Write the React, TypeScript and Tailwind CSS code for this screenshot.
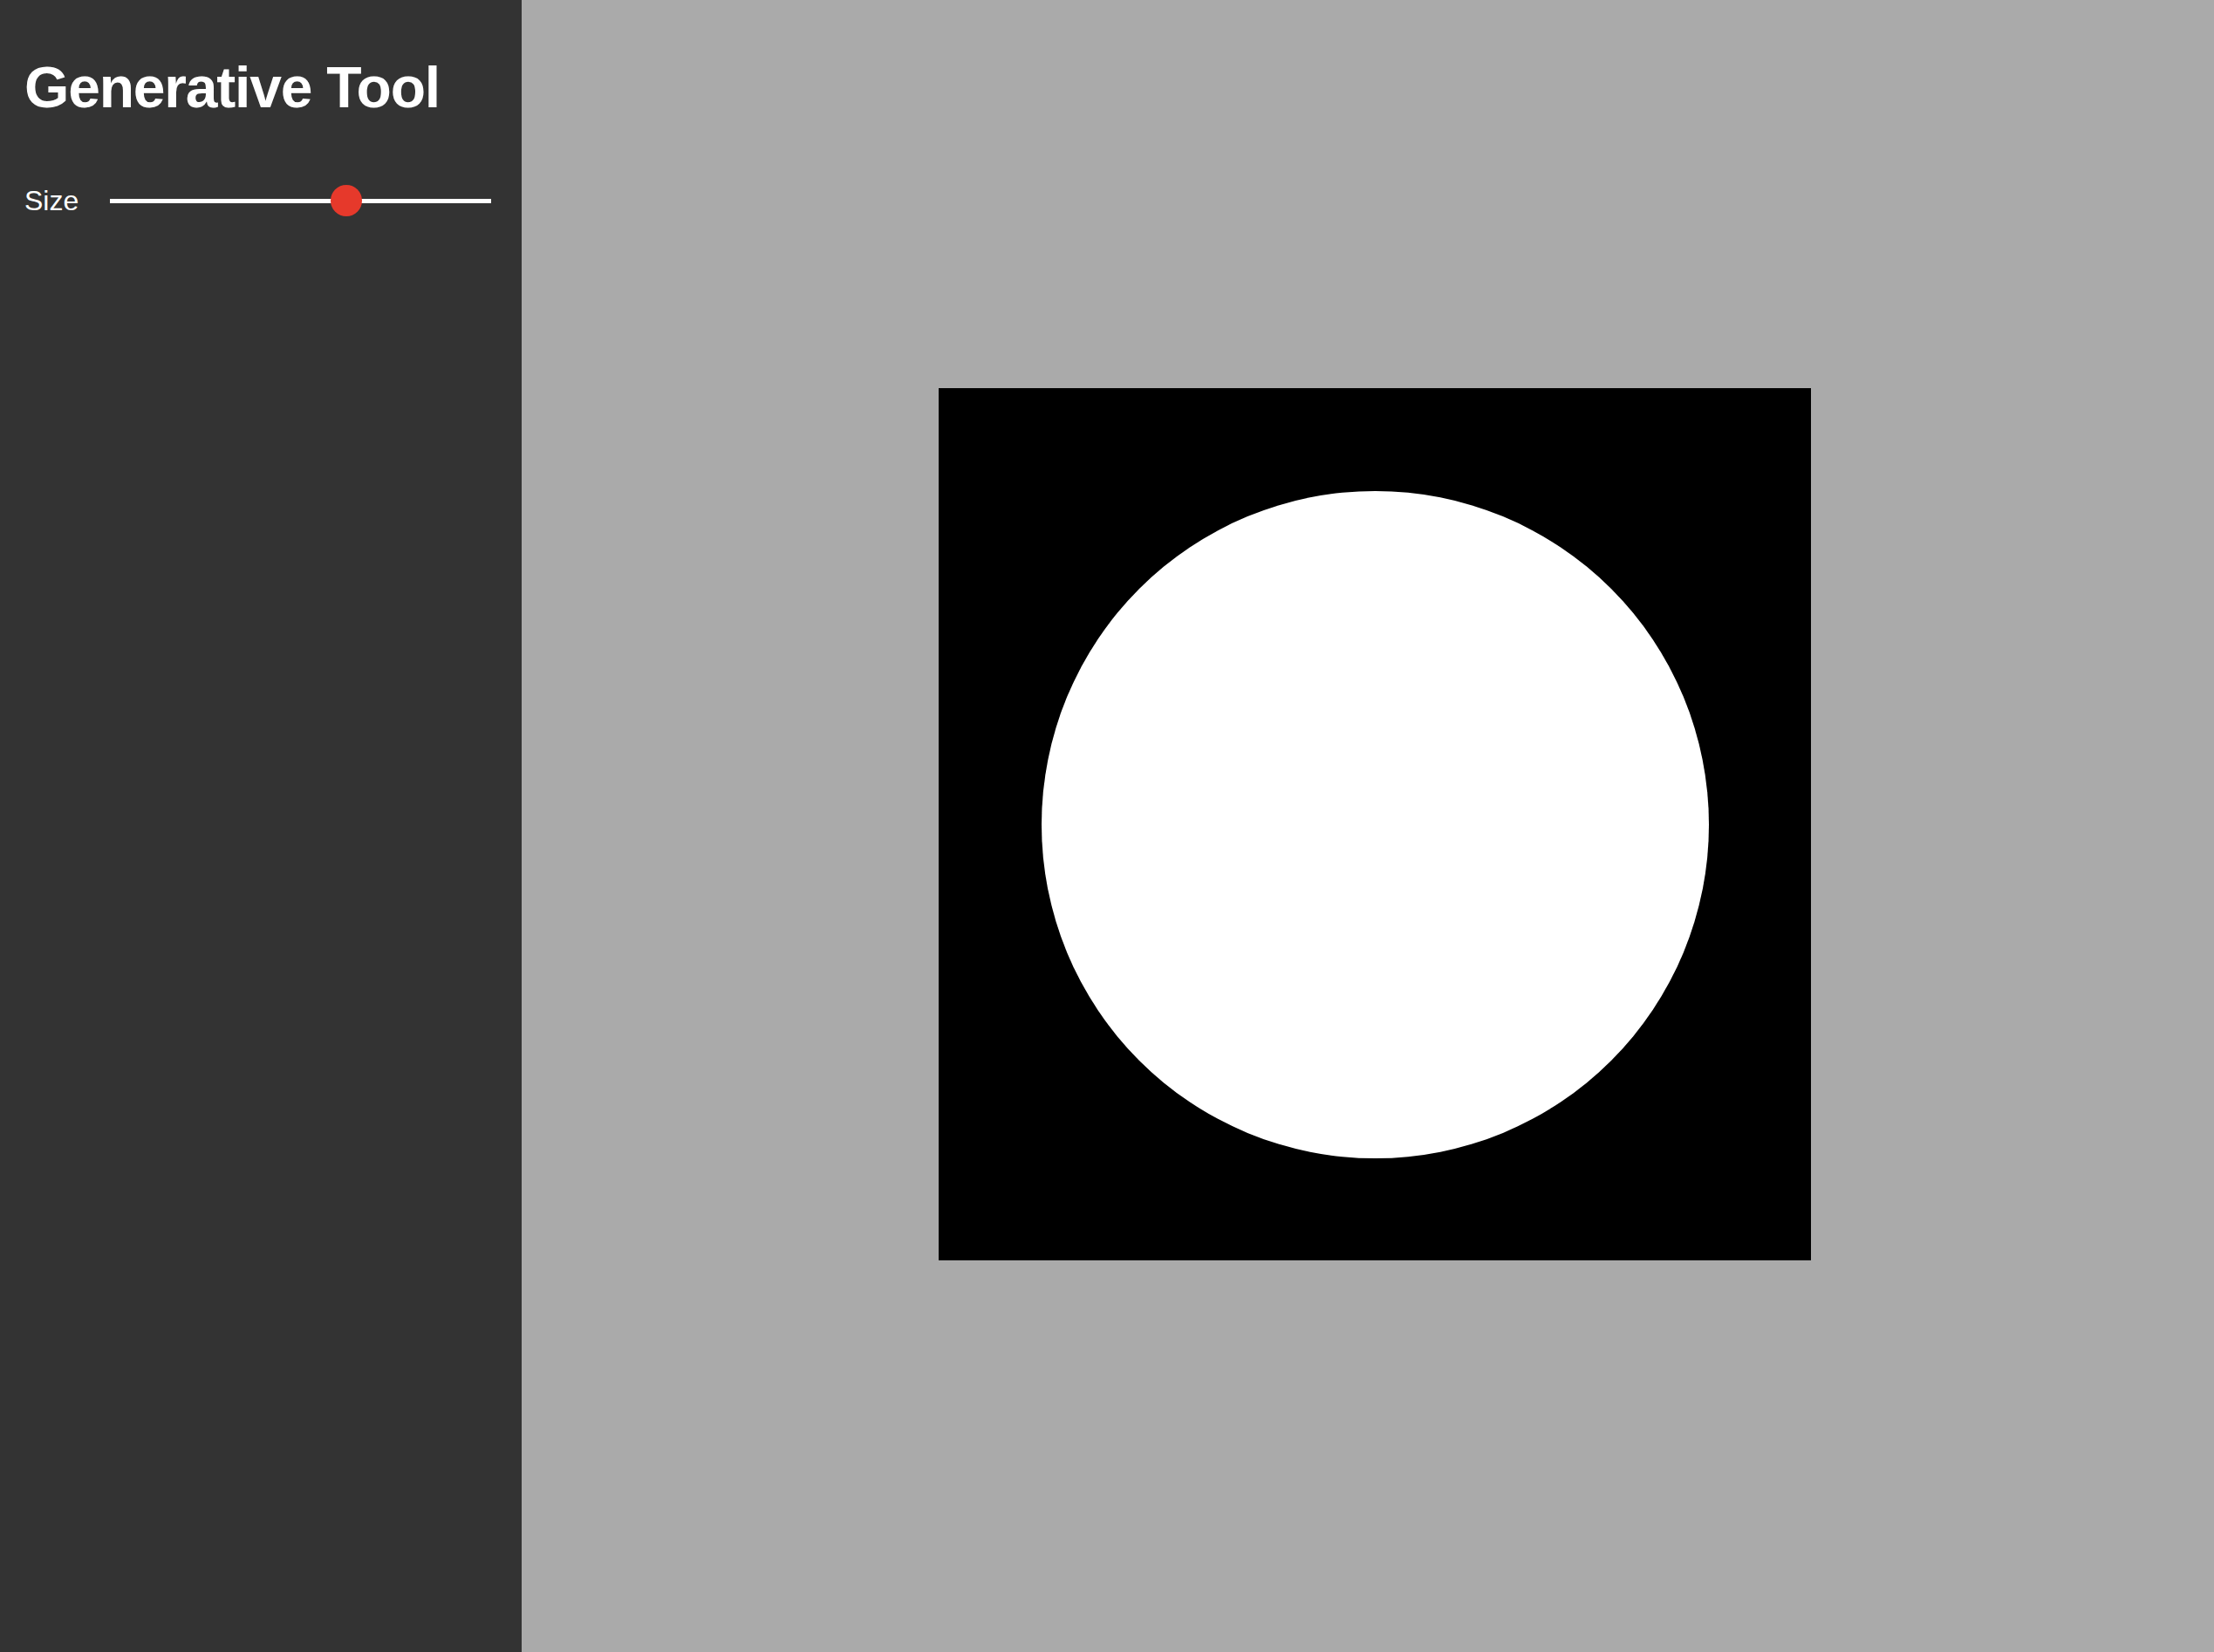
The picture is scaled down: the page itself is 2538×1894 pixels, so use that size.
import React, { useState } from "react";

export default function App() {
  const [value] = useState(0.63);
  const diameter = 765;
  return (
    <div className="flex h-[1894px] w-[2538px] overflow-hidden" style={{ fontFamily: '"Liberation Sans", Arial, sans-serif' }}>
      <aside className="flex w-[598px] shrink-0 flex-col bg-[#333333] pl-[28px] pr-[35px] pt-[67px] text-white">
        <h1 className="text-[66px] font-bold leading-[66px] tracking-[-1.2px]">Generative Tool</h1>
        <div className="mt-[79px] flex h-[36px] items-center">
          <label className="w-[98px] shrink-0 text-[32px] leading-[32px]">Size</label>
          <div className="relative flex h-[36px] flex-1 items-center">
            <div className="h-[5px] w-full bg-white" />
            <div
              className="absolute top-1/2 h-[36px] w-[36px] -translate-x-1/2 -translate-y-1/2 rounded-full bg-[#e6392b]"
              style={{ left: `calc(18px + ${value} * (100% - 36px))` }}
            />
          </div>
        </div>
      </aside>
      <main className="flex flex-1 items-center justify-center bg-[#aaaaaa] pb-1 pl-4">
        <div className="flex h-[1000px] w-[1000px] items-center justify-center bg-black">
          <div className="rounded-full bg-white" style={{ width: diameter, height: diameter }} />
        </div>
      </main>
    </div>
  );
}
